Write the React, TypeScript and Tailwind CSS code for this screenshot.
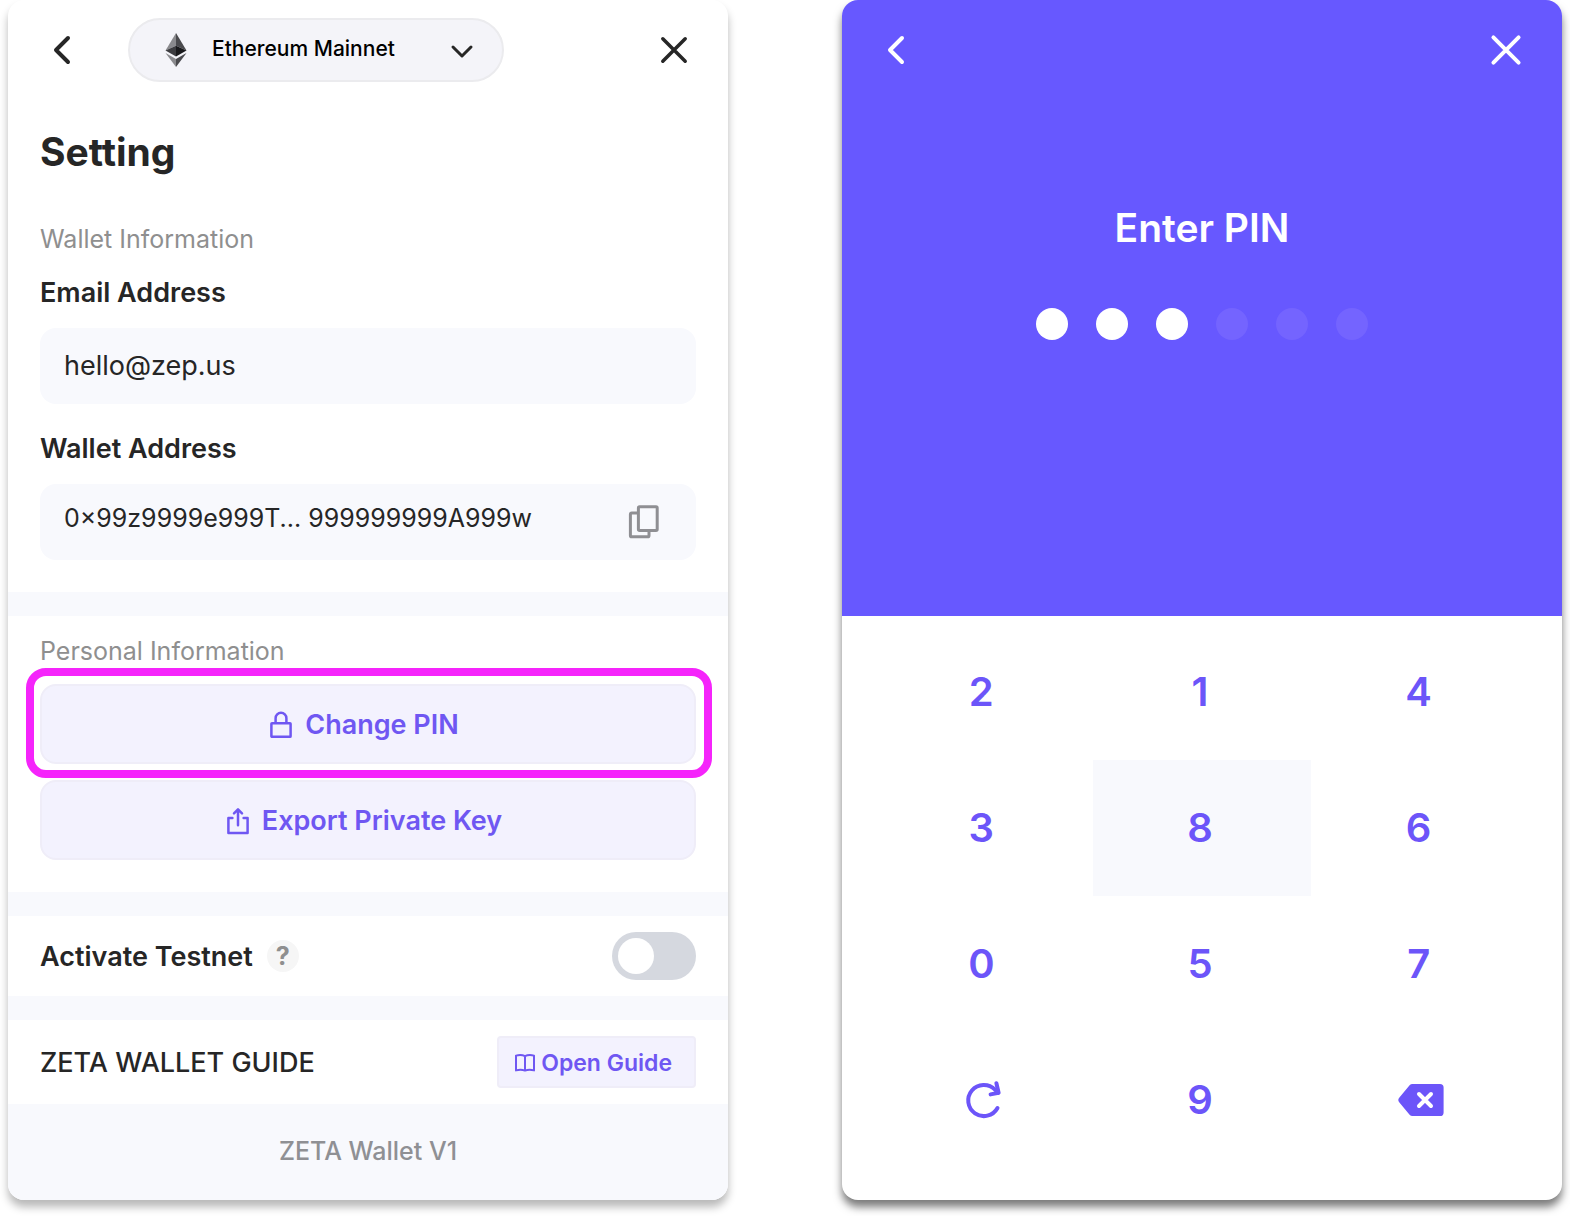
import { useState } from 'react';
import type { ReactNode } from 'react';

const keys = ['2', '1', '4', '3', '8', '6', '0', '5', '7', 'reset', '9', 'delete'];

const PIN_LENGTH = 6;

function ChevronLeftIcon() {
  return (
    <svg width="32" height="32" viewBox="0 0 32 32" fill="none" stroke="currentColor" strokeWidth="4" strokeLinecap="round" strokeLinejoin="round">
      <path d="M22 4 10 16 22 28" />
    </svg>
  );
}

function CloseIcon({ className }: { className: string }) {
  return (
    <svg className={className} viewBox="0 0 32 32" fill="none" stroke="currentColor" strokeWidth="3.5" strokeLinecap="round">
      <path d="M4.8 4.8 27.2 27.2M27.2 4.8 4.8 27.2" />
    </svg>
  );
}

function EthereumIcon() {
  return (
    <svg width="22" height="34" viewBox="0 0 22 34">
      <path d="M11 0 0.5 17.5 11 12.8Z" fill="#8a8a8e" />
      <path d="M11 0 21.5 17.5 11 12.8Z" fill="#4a4a4e" />
      <path d="M11 12.8 0.5 17.5 11 23.4Z" fill="#3c3c40" />
      <path d="M11 12.8 21.5 17.5 11 23.4Z" fill="#19191c" />
      <path d="M0.5 20 11 26 11 34Z" fill="#8a8a8e" />
      <path d="M21.5 20 11 26 11 34Z" fill="#4a4a4e" />
    </svg>
  );
}

function ChevronDownIcon() {
  return (
    <svg width="24" height="24" viewBox="0 0 24 24" fill="none" stroke="currentColor" strokeWidth="3" strokeLinecap="round" strokeLinejoin="round">
      <path d="M3 8 12 17 21 8" />
    </svg>
  );
}

function CopyIcon() {
  return (
    <svg width="32" height="36" viewBox="0 0 32 36" fill="none" stroke="currentColor" strokeWidth="3" strokeLinejoin="round">
      <rect x="10.4" y="2.8" width="18.8" height="23.6" rx="1.2" />
      <path d="M10.4 9H3.8A1.4 1.4 0 0 0 2.4 10.4V31.4A1.4 1.4 0 0 0 3.8 32.8H19.6A1.4 1.4 0 0 0 21 31.4V26.6" />
    </svg>
  );
}

function LockIcon() {
  return (
    <svg width="24" height="28" viewBox="0 0 24 28" fill="none" stroke="currentColor" strokeWidth="2.5" strokeLinejoin="round">
      <rect x="2.4" y="12.2" width="19.2" height="13.6" rx="0.6" />
      <path d="M6.6 12V7.2A5.4 5.4 0 0 1 17.4 7.2V12" />
    </svg>
  );
}

function ExportIcon() {
  return (
    <svg width="24" height="28" viewBox="0 0 24 28" fill="none" stroke="currentColor" strokeWidth="2.5" strokeLinecap="round" strokeLinejoin="round">
      <path d="M6.4 11H2.4V26H21.6V11H17.6" />
      <path d="M12 18.2V2.8M8 6.4 12 2.4 16 6.4" />
    </svg>
  );
}

function BookIcon() {
  return (
    <svg width="24" height="24" viewBox="0 0 24 24" fill="none" stroke="currentColor" strokeWidth="2" strokeLinejoin="round">
      <path d="M12 5.2C9.6 3.9 5.6 3.9 3 4.6V19.4C5.6 18.7 9.6 18.7 12 19.6C14.4 18.7 18.4 18.7 21 19.4V4.6C18.4 3.9 14.4 3.9 12 5.2ZM12 5.2V19.6" />
    </svg>
  );
}

function ResetIcon() {
  return (
    <svg width="40" height="40" viewBox="0 0 40 40" fill="none" stroke="currentColor" strokeWidth="4" strokeLinecap="round" strokeLinejoin="round">
      <path d="M34.5 28A15.6 15.6 0 1 1 32 9.6L35.2 12.8" />
      <path d="M33.4 3.2 35.6 12.8 27.6 14.4" />
    </svg>
  );
}

function DeleteIcon() {
  return (
    <svg width="46" height="32" viewBox="0 0 46 32">
      <path d="M14.5 0H42A3.6 3.6 0 0 1 45.6 3.6V28.4A3.6 3.6 0 0 1 42 32H14.5A4 4 0 0 1 11.6 30.8L1.4 18.6A4 4 0 0 1 1.4 13.4L11.6 1.2A4 4 0 0 1 14.5 0Z" fill="currentColor" />
      <path d="M21 10 33 22M33 10 21 22" stroke="white" strokeWidth="4" strokeLinecap="round" />
    </svg>
  );
}

function Divider() {
  return <div className="h-6 bg-[#f8f9fd]" />;
}

function ActionButton({ icon, children }: { icon: ReactNode; children: ReactNode }) {
  return (
    <button
      type="button"
      className="flex h-20 w-full items-center justify-center gap-3 rounded-2xl border-2 border-[#efedf8] bg-[#f3f2fe] pt-0.5 pr-2 text-[27px] leading-8 font-semibold text-[#6f57f2]"
    >
      {icon}
      {children}
    </button>
  );
}

function SettingPanel() {
  const [testnet, setTestnet] = useState(false);

  return (
    <section className="flex min-w-0 flex-1 flex-col overflow-hidden rounded-2xl bg-white text-[#262626] shadow-[0_7px_9px_rgba(0,0,0,0.28)]">
      <header className="flex h-[100px] items-center pr-9 pl-[38px]">
        <button type="button" aria-label="Back">
          <ChevronLeftIcon />
        </button>
        <div className="relative ml-[50px] h-16 w-[376px]">
          <select
            aria-label="Network"
            className="h-full w-full appearance-none rounded-full border-2 border-[#ebebee] bg-[#f4f4f9] pb-0.5 pl-[82px] text-[21px] font-medium text-black"
          >
            <option>Ethereum Mainnet</option>
          </select>
          <span className="pointer-events-none absolute inset-y-0 left-[37px] flex items-center">
            <EthereumIcon />
          </span>
          <span className="pointer-events-none absolute inset-y-0 right-[30px] flex items-center pt-0.5">
            <ChevronDownIcon />
          </span>
        </div>
        <button type="button" aria-label="Close" className="ml-auto">
          <CloseIcon className="h-9 w-9 p-0.5" />
        </button>
      </header>

      <div className="px-8 pt-7 pb-8">
        <h1 className="text-[39px] leading-12 font-bold">Setting</h1>
        <h2 className="mt-[47px] text-[25px] leading-8 text-[#8f8f8f]">Wallet Information</h2>

        <label htmlFor="email" className="mt-[22px] block text-[27px] leading-8 font-semibold">
          Email Address
        </label>
        <input
          id="email"
          readOnly
          value="hello@zep.us"
          className="mt-[19px] block h-[76px] w-full rounded-2xl bg-[#f8f9fd] px-6 pb-0.5 text-[27px] outline-none"
        />

        <label htmlFor="wallet" className="mt-[29px] block text-[27px] leading-8 font-semibold">
          Wallet Address
        </label>
        <div className="mt-[19px] flex h-[76px] items-center rounded-2xl bg-[#f8f9fd] pr-9 pl-6">
          <input
            id="wallet"
            readOnly
            value="0×99z9999e999T... 999999999A999w"
            className="min-w-0 flex-1 pb-1.5 text-[25px] outline-none"
          />
          <button type="button" aria-label="Copy wallet address" className="text-[#8f8f93]">
            <CopyIcon />
          </button>
        </div>
      </div>

      <Divider />

      <div className="px-8 pt-[19px] pb-8">
        <h2 className="text-[25px] leading-8 text-[#8f8f8f]">Personal Information</h2>
        <div className="mt-[17px] flex flex-col gap-4">
          <div className="relative">
            <ActionButton icon={<LockIcon />}>Change PIN</ActionButton>
            <span className="pointer-events-none absolute -top-4 -right-4 -bottom-3.5 -left-3.5 rounded-[20px] border-8 border-[#f524fb]" />
          </div>
          <ActionButton icon={<ExportIcon />}>Export Private Key</ActionButton>
        </div>
      </div>

      <Divider />

      <div className="flex h-20 items-center px-8">
        <label htmlFor="testnet" className="pt-0.5 text-[27px] leading-8 font-semibold">
          Activate Testnet
        </label>
        <button
          type="button"
          aria-label="About testnet"
          className="ml-3.5 h-8 w-8 rounded-full bg-[#f6f6f6] text-[25px] leading-8 font-bold text-[#8f8f8f]"
        >
          ?
        </button>
        <span className="relative ml-auto h-12 w-[84px]">
          <input
            id="testnet"
            type="checkbox"
            role="switch"
            checked={testnet}
            onChange={(e) => setTestnet(e.target.checked)}
            className="peer block h-full w-full appearance-none rounded-full bg-[#d5d8df] checked:bg-[#6758ff]"
          />
          <span className="pointer-events-none absolute top-1.5 left-1.5 h-9 w-9 rounded-full bg-white peer-checked:left-[42px]" />
        </span>
      </div>

      <Divider />

      <div className="flex items-center justify-between px-8 py-4">
        <h2 className="pt-0.5 text-[27px] leading-8 font-medium">ZETA WALLET GUIDE</h2>
        <button
          type="button"
          className="flex h-[52px] items-center gap-1 rounded-sm border-2 border-[#efedf8] bg-[#f3f2fe] pt-0.5 pr-[22px] pl-3.5 text-[23px] font-semibold text-[#6f57f2]"
        >
          <BookIcon />
          Open Guide
        </button>
      </div>

      <footer className="flex h-24 items-center justify-center bg-[#f8f9fd] pb-0.5 text-[25px] leading-8 font-medium text-[#8f9094]">
        ZETA Wallet V1
      </footer>
    </section>
  );
}

function PinPanel() {
  const [pin, setPin] = useState('123');

  const press = (key: string) => {
    if (key === 'reset') setPin('');
    else if (key === 'delete') setPin(pin.slice(0, -1));
    else if (pin.length < PIN_LENGTH) setPin(pin + key);
  };

  return (
    <section className="flex min-w-0 flex-1 flex-col overflow-hidden rounded-2xl bg-white shadow-[0_7px_9px_rgba(0,0,0,0.52)]">
      <div className="h-[616px] bg-[#6758ff] text-white">
        <header className="flex h-[100px] items-center justify-between pr-9 pl-[38px]">
          <button type="button" aria-label="Back">
            <ChevronLeftIcon />
          </button>
          <button type="button" aria-label="Close">
            <CloseIcon className="h-10 w-10 p-0.5" />
          </button>
        </header>
        <h1 className="mt-[104px] text-center text-[39px] leading-12 font-semibold">Enter PIN</h1>
        <div className="mt-14 flex justify-center gap-7">
          {Array.from({ length: PIN_LENGTH }, (_, i) => (
            <span key={i} className={`h-8 w-8 rounded-full ${i < pin.length ? 'bg-white' : 'bg-[#7464ff]'}`} />
          ))}
        </div>
      </div>

      <div className="grid flex-1 grid-cols-3 content-start px-8 py-2">
        {keys.map((key) => (
          <button
            key={key}
            type="button"
            aria-label={key}
            onClick={() => press(key)}
            className={`flex h-[136px] items-center justify-center text-[40px] font-semibold text-[#6c55f9] ${key === '8' ? 'bg-[#f8f9fd]' : ''} ${key === 'reset' || key === 'delete' ? '' : 'pr-1'}`}
          >
            {key === 'reset' ? <ResetIcon /> : key === 'delete' ? <DeleteIcon /> : key}
          </button>
        ))}
      </div>
    </section>
  );
}

export default function App() {
  return (
    <main className="flex gap-[114px] bg-white px-2 pb-4 font-['Inter','Liberation_Sans',sans-serif]">
      <SettingPanel />
      <PinPanel />
    </main>
  );
}
